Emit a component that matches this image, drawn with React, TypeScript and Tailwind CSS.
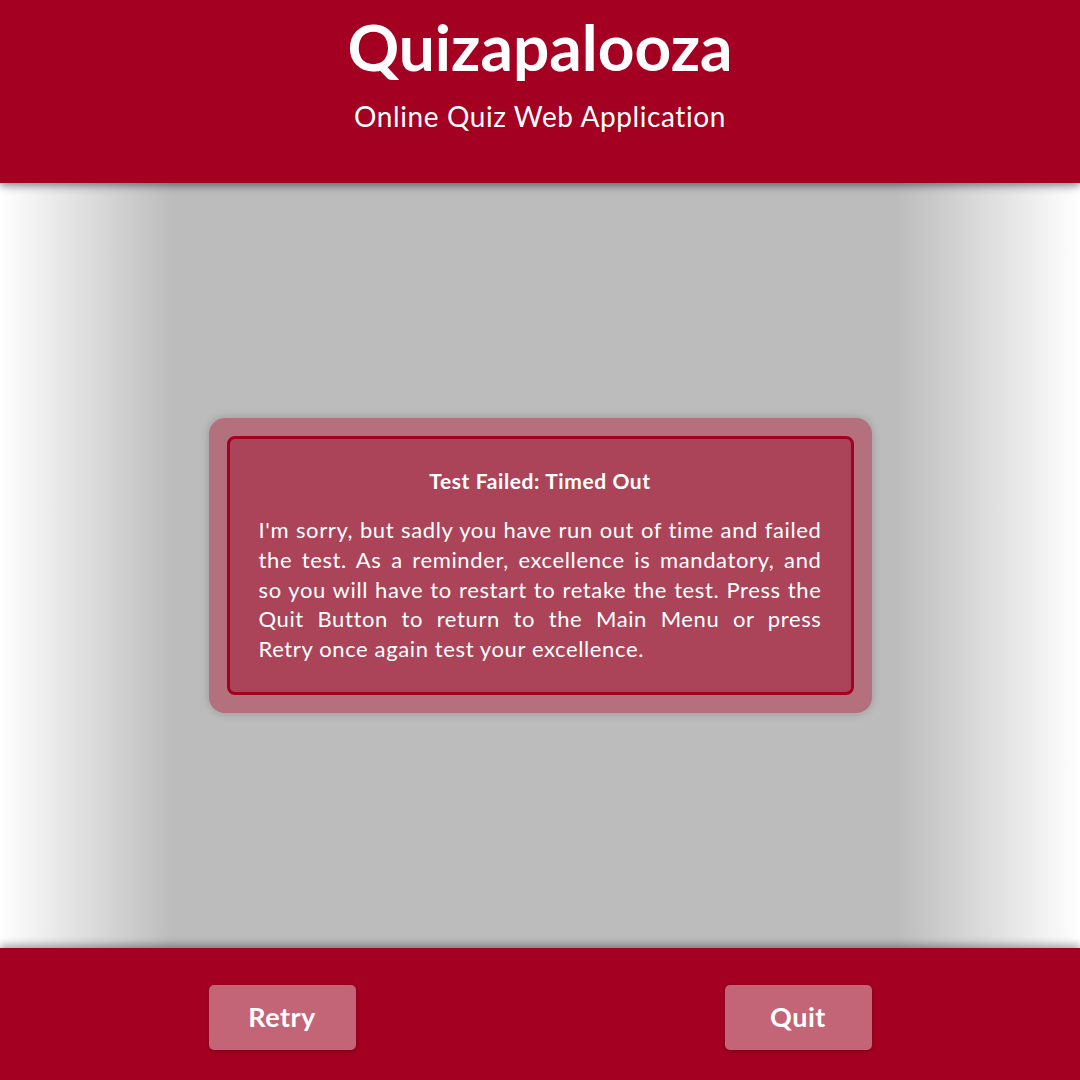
export default function App() {
  return (
    <div className="flex h-[1080px] w-[1080px] flex-col overflow-hidden font-['Lato',sans-serif] text-white">
      <header className="relative z-10 flex h-[183px] shrink-0 flex-col items-center bg-[#a40022] shadow-[0_3px_8px_rgba(0,0,0,0.45)]">
        <h1 className="mt-[9px] text-[64px] font-bold leading-[76px]">Quizapalooza</h1>
        <p className="mt-[14px] text-[28px] leading-[34px] tracking-[0.6px]">Online Quiz Web Application</p>
      </header>

      <main className="flex flex-1 items-center justify-center bg-[linear-gradient(to_right,#ffffff_0%,#bcbcbc_16%,#bcbcbc_83%,#ffffff_100%)]">
        <div className="w-[663px] rounded-[16px] bg-[#b4707c] p-[18px] shadow-[0_0_10px_rgba(0,0,0,0.2)]">
          <div className="rounded-[8px] border-[3px] border-[#a40022] bg-[#ab4459] px-[29px] pb-[28px] pt-[28px]">
            <h2 className="text-center text-[21px] font-bold leading-[28px] tracking-[0.6px]">Test Failed: Timed Out</h2>
            <p className="mt-[20px] text-justify text-[22px] leading-[29.8px] tracking-[0.62px]">
              I'm sorry, but sadly you have run out of time and failed the test. As a reminder, excellence is
              mandatory, and so you will have to restart to retake the test. Press the Quit Button to return to
              the Main Menu or press Retry{"\u00a0"}once again test your excellence.
            </p>
          </div>
        </div>
      </main>

      <footer className="relative z-10 flex h-[132px] shrink-0 items-center justify-center bg-[#a40022] shadow-[0_-3px_8px_rgba(0,0,0,0.35)]">
        <div className="flex w-[663px] justify-between pt-[6px]">
          <button className="h-[65px] w-[147px] rounded-[5px] bg-[#c46577] text-[27px] font-bold tracking-[0.5px] text-white shadow-[0_1px_4px_rgba(0,0,0,0.25)]">
            Retry
          </button>
          <button className="h-[65px] w-[147px] rounded-[5px] bg-[#c46577] text-[27px] font-bold tracking-[0.5px] text-white shadow-[0_1px_4px_rgba(0,0,0,0.25)]">
            Quit
          </button>
        </div>
      </footer>
    </div>
  );
}
